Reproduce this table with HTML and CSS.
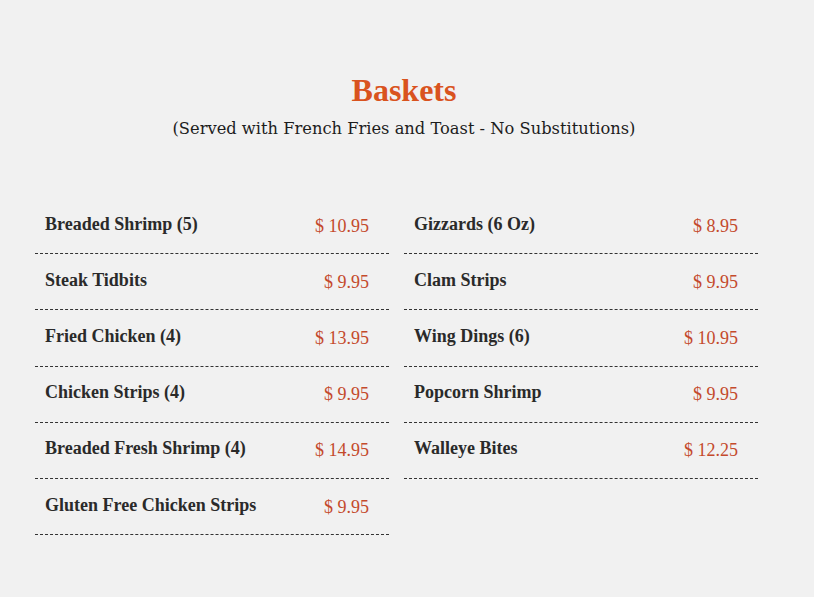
FILE: index.html
```html
<!DOCTYPE html>
<html lang="en">
<head>
<meta charset="utf-8">
<title>Baskets</title>
<link rel="stylesheet" href="styles.css">
</head>
<body>
<main class="menu">
  <header class="menu-head">
    <h1 class="menu-title">Baskets</h1>
    <p class="menu-sub">(Served with French Fries and Toast - No Substitutions)</p>
  </header>
  <div class="menu-grid">
    <div class="col">
      <div class="item"><span class="name">Breaded Shrimp (5)</span><span class="price">$ 10.95</span></div>
      <div class="item"><span class="name">Steak Tidbits</span><span class="price">$ 9.95</span></div>
      <div class="item"><span class="name">Fried Chicken (4)</span><span class="price">$ 13.95</span></div>
      <div class="item"><span class="name">Chicken Strips (4)</span><span class="price">$ 9.95</span></div>
      <div class="item"><span class="name">Breaded Fresh Shrimp (4)</span><span class="price">$ 14.95</span></div>
      <div class="item"><span class="name">Gluten Free Chicken Strips</span><span class="price">$ 9.95</span></div>
    </div>
    <div class="col">
      <div class="item"><span class="name">Gizzards (6 Oz)</span><span class="price">$ 8.95</span></div>
      <div class="item"><span class="name">Clam Strips</span><span class="price">$ 9.95</span></div>
      <div class="item"><span class="name">Wing Dings (6)</span><span class="price">$ 10.95</span></div>
      <div class="item"><span class="name">Popcorn Shrimp</span><span class="price">$ 9.95</span></div>
      <div class="item"><span class="name">Walleye Bites</span><span class="price">$ 12.25</span></div>
    </div>
  </div>
</main>
</body>
</html>
```

FILE: styles.css
```css
html, body {
  margin: 0;
  padding: 0;
  background: #f1f1f1;
}
body {
  font-family: "Liberation Serif", "DejaVu Serif", serif;
  color: #2a2a2a;
}
.menu {
  padding: 70px 0 0 35px;
  width: 723px;
}
.menu-head {
  text-align: center;
  padding-left: 15px;
}
.menu-title {
  margin: 0;
  font-size: 32px;
  line-height: 40px;
  font-weight: 700;
  color: #d9531e;
}
.menu-sub {
  margin: 0;
  font-family: "DejaVu Serif", serif;
  font-size: 16.3px;
  line-height: 37px;
  color: #1d1d1d;
}
.menu-grid {
  display: grid;
  grid-template-columns: 354px 354px;
  column-gap: 15px;
  margin-top: 51px;
}
.col {
  display: flex;
  flex-direction: column;
}
.item {
  display: flex;
  justify-content: space-between;
  align-items: center;
  height: 55.2px;
  padding: 0 20px 0 10px;
  border-bottom: 1px dashed #333;
}
.name {
  font-weight: 700;
  font-size: 18px;
  color: #2a2a2a;
  margin-top: -3px;
}
.price {
  font-size: 18px;
  color: #c44a2c;
  margin-top: 1px;
}
```
